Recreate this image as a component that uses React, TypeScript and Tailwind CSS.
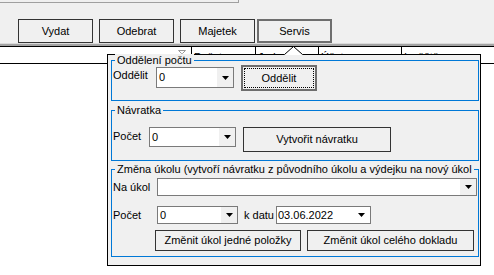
import React from "react";

const Arrow = () => (
  <svg width="7" height="4" viewBox="0 0 7 4" className="block">
    <path d="M0 0H7L3.5 4Z" fill="#000" />
  </svg>
);

const Combo = ({ className, value }: { className: string; value: string }) => (
  <div className={`flex items-center bg-white border border-[#7a7a7a] ${className}`}>
    <span className="flex-1 pl-[2px]">{value}</span>
    <span className="flex w-[17px] h-full items-center justify-center bg-[#f0f0f0] border-l border-white">
      <Arrow />
    </span>
  </div>
);

const GroupBox = ({ title, className, children }: any) => (
  <div className={`relative border border-[#0078d7] ${className}`}>
    <span className="absolute -top-[7px] left-[3px] bg-[#f0f0f0] px-[2px] whitespace-nowrap">
      {title}
    </span>
    {children}
  </div>
);

const Btn = ({ className, children }: any) => (
  <div className={`flex items-center justify-center border border-[#333] bg-[#f0f0f0] ${className}`}>
    {children}
  </div>
);

export default function App() {
  const cols = [
    { name: "", w: "w-[192px]" },
    { name: "Počet", w: "w-[64px]" },
    { name: "Jedn.", w: "w-[63px]" },
    { name: "Účet", w: "w-[83px]" },
    { name: "Izvěštěno", w: "flex-1" },
  ];
  return (
    <div className="relative flex flex-col w-[494px] h-[275px] overflow-hidden bg-[#f0f0f0] font-['Liberation_Sans',Arial,sans-serif] text-[11px] leading-[13px] text-black">
      <div className="h-[3px] w-[239px] border-b border-r border-[#a0a0a0]" />
      <div className="flex pl-[18px] pt-[16px]">
        <Btn className="w-[75px] h-[24px]">Vydat</Btn>
        <Btn className="ml-[6px] w-[75px] h-[24px]">Odebrat</Btn>
        <Btn className="ml-[6px] w-[75px] h-[24px]">Majetek</Btn>
        <div className="ml-[2px] flex w-[75px] h-[24px] items-center justify-center border-2 border-[#6e6e6e]">
          Servis
        </div>
      </div>
      <div className="h-[3px] border-t border-[#dadada] bg-[#a3a3a3]" />
      <div className="flex-1 flex flex-col bg-white border-t border-black">
        <div className="flex h-[17px] border-b border-black">
          {cols.map((c, i) => (
            <div
              key={i}
              className={`relative flex ${c.w} ${i < cols.length - 1 ? "border-r border-black" : ""} pl-[2px] pt-[4px]`}
            >
              {c.name}
              {i === 0 && (
                <svg width="8" height="6" viewBox="0 0 8 6" className="absolute right-[5px] top-[3px]">
                  <path d="M0.5 0.5H7.5L4.5 3.5V5.5H3.5V3.5Z" fill="none" stroke="#9a9a9a" />
                </svg>
              )}
            </div>
          ))}
        </div>
      </div>

      <div className="absolute left-[107px] top-[54px] w-[374px] h-[212px] border border-black bg-[#f0f0f0] pl-[3px] pr-[1px]">
        <GroupBox title="Oddělení počtu" className="mt-[5px] h-[41px]">
          <div className="flex items-start pl-[1px]">
            <span className="mt-[8px] w-[43px]">Oddělit</span>
            <Combo className="mt-[6px] w-[78px] h-[21px]" value="0" />
            <div className="ml-[7px] mt-[4px] flex w-[76px] h-[26px] items-center justify-center border-2 border-[#6e6e6e] p-[1px]">
              <span className="flex h-full w-full items-center justify-center border border-dotted border-black">
                Oddělit
              </span>
            </div>
          </div>
        </GroupBox>

        <GroupBox title="Návratka" className="mt-[9px] h-[51px]">
          <div className="flex items-start pl-[1px]">
            <span className="mt-[19px] w-[36px]">Počet</span>
            <Combo className="mt-[16px] w-[87px] h-[20px]" value="0" />
            <Btn className="ml-[7px] mt-[16px] w-[148px] h-[25px]">Vytvořit návratku</Btn>
          </div>
        </GroupBox>

        <GroupBox
          title="Změna úkolu (vytvoří návratku z původního úkolu a výdejku na nový úkol"
          className="mt-[8px] h-[88px]"
        >
          <div className="flex items-start pl-[1px] pr-[1px] mt-[8px]">
            <span className="mt-[3px] w-[44px]">Na úkol</span>
            <Combo className="flex-1 h-[18px]" value="" />
          </div>
          <div className="flex items-start pl-[1px] mt-[10px]">
            <span className="mt-[3px] w-[44px]">Počet</span>
            <Combo className="w-[81px] h-[18px]" value="0" />
            <span className="ml-[6px] mt-[3px] w-[32px]">k datu</span>
            <div className="flex items-center w-[95px] h-[18px] bg-white border border-[#7a7a7a]">
              <span className="flex-1 pl-[1px]">03.06.2022</span>
              <span className="flex w-[17px] justify-center">
                <Arrow />
              </span>
            </div>
          </div>
          <div className="flex pl-[43px] mt-[6px]">
            <Btn className="w-[146px] h-[21px]">Změnit úkol jedné položky</Btn>
            <Btn className="ml-[6px] w-[167px] h-[21px]">Změnit úkol celého dokladu</Btn>
          </div>
        </GroupBox>
      </div>

      <svg width="19" height="9" viewBox="0 0 19 9" className="absolute left-[284px] top-[46px]">
        <path d="M0 9L9.5 0.5L19 9Z" fill="#fff" />
        <path d="M0.5 8.5L9.5 0.5L18.5 8.5" fill="none" stroke="#000" />
      </svg>
    </div>
  );
}
